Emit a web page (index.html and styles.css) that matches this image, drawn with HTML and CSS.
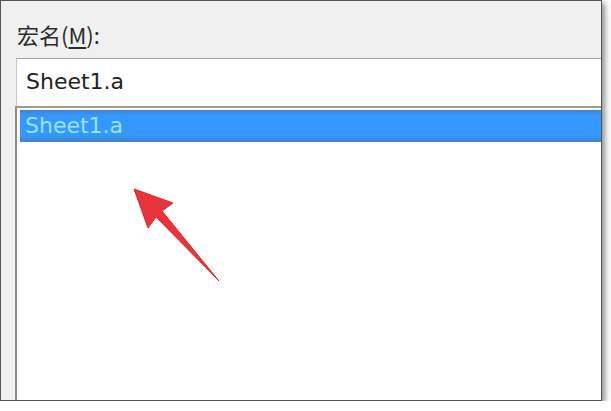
FILE: index.html
```html
<!DOCTYPE html>
<html>
<head>
    <title>宏</title>
    <link rel="stylesheet" href="styles.css">
</head>
<body>
    <div class="dialog">
        <div class="label">宏名(<u>M</u>):</div>
        <div class="macro-input">Sheet1.a</div>
        <div class="macro-list">
            <div class="item selected">Sheet1.a</div>
        </div>
        <svg class="arrow" width="602" height="401" viewBox="0 0 602 401">
            <polygon points="134,189 173,203 162,211 219,281 156,217 148,228" fill="#e8343a" stroke="#d92a30" stroke-width="1" stroke-linejoin="round"/>
        </svg>
    </div>
</body>
</html>
```

FILE: styles.css
```css
body {
    margin: 0;
    background: #fff;
    font-family: "DejaVu Sans", "Noto Sans CJK SC", sans-serif;
}
.dialog {
    position: relative;
    box-sizing: border-box;
    width: 602px;
    height: 401px;
    background: #f0f0f0;
    border: 1px solid #555;
    box-shadow: 3px 3px 6px rgba(0, 0, 0, 0.45);
    padding-left: 14px;
    display: flex;
    flex-direction: column;
}
.label {
    margin-top: 18px;
    height: 30px;
    line-height: 30px;
    font-family: "Noto Sans CJK SC", sans-serif;
    font-size: 22px;
    color: #2b2b2b;
    padding-left: 2px;
}
.label u {
    text-underline-offset: 3px;
}
.macro-input {
    margin-top: 9px;
    margin-left: 1px;
    height: 47px;
    line-height: 46px;
    background: #fff;
    border-top: 1px solid #a5a5a5;
    border-left: 1px solid #c8c8c8;
    padding-left: 9px;
    font-size: 22px;
    color: #222;
}
.macro-list {
    flex: 1;
    background: #fff;
    border-top: 2px solid #9a9a9a;
    border-left: 2px solid #8c8c8c;
    padding: 2px 0 0 3px;
}
.item {
    height: 32px;
    line-height: 32px;
    padding-left: 5px;
    font-size: 22px;
}
.selected {
    color: #9fe2ff;
    background: linear-gradient(#4682c4 0, #3a8fe8 3px, #3399ff 6px, #3399ff 26px, #3a8fe8 28px, #4682c4 32px);
}
.arrow {
    position: absolute;
    left: -1px;
    top: -1px;
    pointer-events: none;
}
```
